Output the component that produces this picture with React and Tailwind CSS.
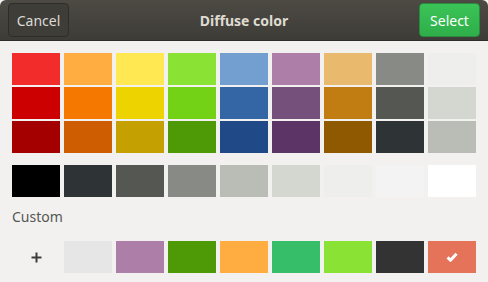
import React from 'react'

const palette = [
  ['#f22b2b', '#ffac40', '#ffe851', '#8ae234', '#729fcf', '#ad7fa8', '#e9b96e', '#888a85', '#eeeeec'],
  ['#cc0000', '#f57900', '#edd400', '#73d216', '#3465a4', '#75507b', '#c17d11', '#555753', '#d3d7cf'],
  ['#a40000', '#ce5c00', '#c4a000', '#4e9a06', '#204a87', '#5c3566', '#8f5902', '#2e3436', '#babdb6'],
]
const grays = ['#000000', '#2e3436', '#555753', '#888a85', '#babdb6', '#d3d7cf', '#eeeeec', '#f3f3f3', '#ffffff']
const custom = ['#e6e6e6', '#ad7fa8', '#4e9a06', '#ffac40', '#37be69', '#8ae234', '#333333']

function Swatch({ color, children }){
  return <div className="w-[48px] h-[32px] flex items-center justify-center" style={{ backgroundColor: color }}>{children}</div>
}

export default function App(){
  return (
    <div className="w-[488px] h-[282px] bg-[#f2f1f0] overflow-hidden" style={{ fontFamily: '"Noto Sans", "Open Sans", sans-serif' }}>
      <div className="h-[41px] flex items-center justify-between px-[8px] rounded-t-[6px] bg-gradient-to-b from-[#4d4a44] to-[#3e3c37] border-b border-[#2d2c29]">
        <button className="h-[34px] w-[61px] rounded-[4px] border border-[#2e2d2a] bg-[#3f3d38] text-[14px] text-[#dcdad5] flex items-center justify-center">Cancel</button>
        <div className="text-[14px] font-bold text-[#dfdbd2]">Diffuse color</div>
        <button className="h-[34px] w-[61px] rounded-[4px] border border-[#2a8a3e] bg-gradient-to-b from-[#3ac457] to-[#2fae4a] text-[14px] text-white flex items-center justify-center">Select</button>
      </div>
      <div className="px-[12px] pt-[12px]">
        <div className="flex flex-col gap-[2px]">
          {palette.map((row, i) => (
            <div key={i} className="flex gap-[4px]">
              {row.map((c, j) => <Swatch key={j} color={c} />)}
            </div>
          ))}
        </div>
        <div className="flex gap-[4px] mt-[12px]">
          {grays.map((c, j) => <Swatch key={j} color={c} />)}
        </div>
        <div className="mt-[11px] text-[14px] text-[#555753] leading-[18px]">Custom</div>
        <div className="flex gap-[4px] mt-[15px]">
          <div className="w-[48px] h-[32px] flex items-center justify-center">
            <svg width="11" height="11" viewBox="0 0 11 11"><path d="M5.5 0.5v10M0.5 5.5h10" stroke="#3c3c3c" strokeWidth="2" /></svg>
          </div>
          {custom.map((c, j) => <Swatch key={j} color={c} />)}
          <Swatch color="#e5735a">
            <svg width="12" height="10" viewBox="0 0 12 10"><path d="M1.6 5.4l2.9 2.9l6-6.6" fill="none" stroke="#ffffff" strokeWidth="3" strokeLinejoin="round" /></svg>
          </Swatch>
        </div>
      </div>
    </div>
  )
}
